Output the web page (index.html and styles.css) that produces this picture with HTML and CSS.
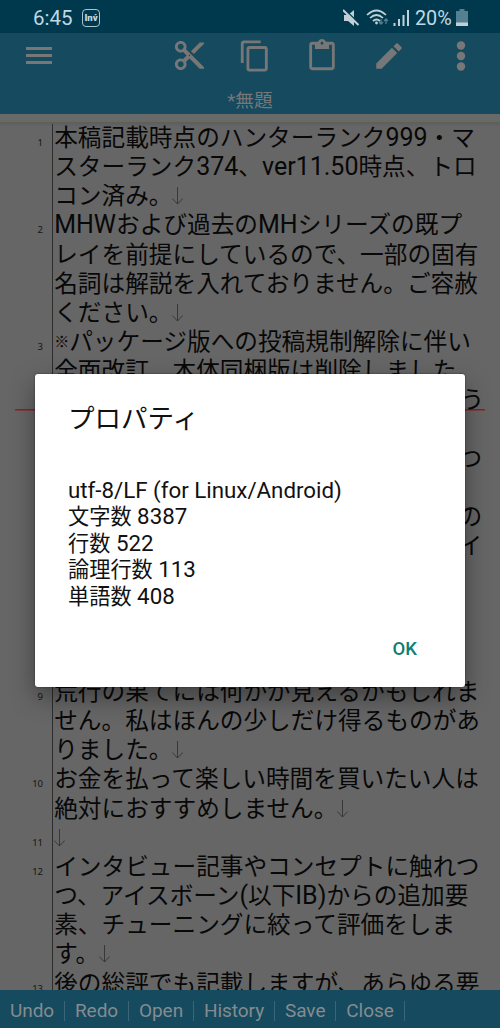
FILE: index.html
```html
<!DOCTYPE html>
<html lang="ja">
<head>
<meta charset="utf-8">
<title>無題</title>
<link rel="stylesheet" href="styles.css">
</head>
<body>
<svg class="defs" width="0" height="0"><symbol id="ret" viewBox="0 0 11 18"><path d="M5.5 0V17M.3 11.5L5.5 17L10.7 11.5" fill="none" stroke="#333" stroke-width=".9"/></symbol></svg>
<div class="screen">
  <header class="status">
    <span class="clock">6:45</span>
    <span class="inv">Inv́</span>
    <svg class="sysicons" width="68" height="20" viewBox="0 0 68 20">
      <path d="M1 6h4l6-5v16l-6-5H1z" fill="#c0d0d6"/>
      <path d="M1 0L17 15" stroke="#00394d" stroke-width="1.500"/>
      <path d="M0 1L15.500 16" stroke="#c0d0d6" stroke-width="2"/>
      <g fill="none" stroke="#c0d0d6" stroke-width="1.7"><path d="M24 6Q33.500-3 43 6M27 9Q33.500 3 40 9M30 12Q33.500 9 37 12"/></g>
      <circle cx="33.500" cy="14" r="1.400" fill="#c0d0d6"/>
      <path d="M38 10v5m-2-2l2 2 2-2M43 15v-5m-2 2l2-2 2 2" fill="none" stroke="#54808f" stroke-width="1.300"/>
      <path d="M51.500 14v3M56 10v7M60.500 6v11M65 1v16" stroke="#c0d0d6" stroke-width="2"/>
    </svg>
    <span class="percent">20%</span>
    <svg class="battery" width="12" height="18" viewBox="0 0 12 18"><path d="M3.500 0h5v2H12v12H0V2h3.500z" fill="#54808f"/><path d="M0 13.500h12V17H0z" fill="#c0d0d6"/></svg>
  </header>
  <nav class="toolbar">
    <div class="tools">
      <svg class="menu" width="26" height="18" viewBox="0 0 26 18"><path d="M0 1.500h26M0 8.500h26M0 15.500h26" stroke="currentColor" stroke-width="2.800"/></svg>
      <svg class="tool cut" viewBox="0 0 24 24"><path d="M9.640 7.640c.23-.5.360-1.050.360-1.640 0-2.210-1.790-4-4-4S2 3.790 2 6s1.790 4 4 4c.59 0 1.140-.13 1.640-.36L10 12l-2.360 2.360C7.140 14.130 6.590 14 6 14c-2.210 0-4 1.790-4 4s1.790 4 4 4 4-1.790 4-4c0-.59-.13-1.140-.36-1.640L12 14l7 7h3v-1L9.640 7.640zM6 8c-1.100 0-2-.89-2-2s.9-2 2-2 2 .89 2 2-.9 2-2 2zm0 12c-1.100 0-2-.89-2-2s.9-2 2-2 2 .89 2 2-.9 2-2 2zm6-7.500c-.28 0-.5-.22-.5-.5s.22-.5.5-.5.5.22.5.5-.22.5-.5.5zM19 3l-6 6 2 2 7-7V3z"/></svg>
      <svg class="tool copy" viewBox="0 0 24 24"><path d="M16 1H4c-1.100 0-2 .9-2 2v14h2V3h12V1zm3 4H8c-1.100 0-2 .9-2 2v14c0 1.100.9 2 2 2h11c1.100 0 2-.9 2-2V7c0-1.100-.9-2-2-2zm0 16H8V7h11v14z"/></svg>
      <svg class="tool paste" viewBox="0 0 24 24"><path d="M19 2h-4.180C14.400.84 13.300 0 12 0c-1.300 0-2.400.84-2.820 2H5c-1.100 0-2 .9-2 2v16c0 1.100.9 2 2 2h14c1.100 0 2-.9 2-2V4c0-1.100-.9-2-2-2zm-7 0c.55 0 1 .45 1 1s-.45 1-1 1-1-.45-1-1 .45-1 1-1zm7 18H5V4h2v3h10V4h2v16z"/></svg>
      <svg class="tool edit" viewBox="0 0 24 24"><path d="M3 17.250V21h3.750L17.810 9.940l-3.750-3.750L3 17.250zM20.710 7.040c.39-.39.390-1.020 0-1.410l-2.340-2.340c-.39-.39-1.020-.39-1.410 0l-1.830 1.830 3.750 3.750 1.830-1.830z"/></svg>
      <svg class="more" width="10" height="30" viewBox="0 0 10 30"><g fill="currentColor"><circle cx="5" cy="4.500" r="4.200"/><circle cx="5" cy="15" r="4.200"/><circle cx="5" cy="25.500" r="4.200"/></g></svg>
    </div>
    <div class="filename">*無題</div>
  </nav>
  <main class="editor">
    <div class="row"><i>1</i><p>本稿記載時点のハンターランク<b>999</b>・マ</p></div>
    <div class="row"><i></i><p>スターランク<b>374</b>、<b>ver11.50</b>時点、トロ</p></div>
    <div class="row"><i></i><p>コン済み。<svg class="ret"><use href="#ret"/></svg></p></div>
    <div class="row"><i>2</i><p><b>MHW</b>および過去の<b>MH</b>シリーズの既プ</p></div>
    <div class="row"><i></i><p>レイを前提にしているので、一部の固有</p></div>
    <div class="row"><i></i><p>名詞は解説を入れておりません。ご容赦</p></div>
    <div class="row"><i></i><p>ください。<svg class="ret"><use href="#ret"/></svg></p></div>
    <div class="row"><i>3</i><p><span class="mark">※</span>パッケージ版への投稿規制解除に伴い</p></div>
    <div class="row"><i></i><p>全面改訂、本体同梱版は削除しました。</p></div>
    <div class="row current"><i></i><p class="tail">う</p></div>
    <div class="row"><i></i><p></p></div>
    <div class="row"><i></i><p class="tail">つ</p></div>
    <div class="row"><i></i><p></p></div>
    <div class="row"><i></i><p class="tail">の</p></div>
    <div class="row"><i></i><p class="tail">イ</p></div>
    <div class="row"><i></i><p></p></div>
    <div class="row"><i></i><p></p></div>
    <div class="row"><i></i><p></p></div>
    <div class="row"><i></i><p></p></div>
    <div class="row"><i>9</i><p>荒行の果てには何かが見えるかもしれま</p></div>
    <div class="row"><i></i><p>せん。私はほんの少しだけ得るものがあ</p></div>
    <div class="row"><i></i><p>りました。<svg class="ret"><use href="#ret"/></svg></p></div>
    <div class="row"><i>10</i><p>お金を払って楽しい時間を買いたい人は</p></div>
    <div class="row"><i></i><p>絶対におすすめしません。<svg class="ret"><use href="#ret"/></svg></p></div>
    <div class="row"><i>11</i><p><svg class="ret"><use href="#ret"/></svg></p></div>
    <div class="row"><i>12</i><p>インタビュー記事やコンセプトに触れつ</p></div>
    <div class="row"><i></i><p>つ、アイスボーン<b>(</b>以下<b>IB)</b>からの追加要</p></div>
    <div class="row"><i></i><p>素、チューニングに絞って評価をしま</p></div>
    <div class="row"><i></i><p>す。<svg class="ret"><use href="#ret"/></svg></p></div>
    <div class="row"><i>13</i><p>後の総評でも記載しますが、あらゆる要</p></div>
  </main>
  <footer class="actions"><span>Undo</span><span>Redo</span><span>Open</span><span>History</span><span>Save</span><span>Close</span></footer>
  <section class="dialog" role="dialog">
    <h1>プロパティ</h1>
    <div class="details">
      <div><b>utf-8/LF (for Linux/Android)</b></div>
      <div>文字数<b> 8387</b></div>
      <div>行数<b> 522</b></div>
      <div>論理行数<b> 113</b></div>
      <div>単語数<b> 408</b></div>
    </div>
    <button class="ok">OK</button>
  </section>
</div>
</body>
</html>
```

FILE: styles.css
```css
* { box-sizing: border-box; }
body { margin: 0; background: #666; font-family: Roboto, "Noto Sans CJK JP", sans-serif; }
.defs { position: absolute; }
.screen { position: relative; display: flex; flex-direction: column; width: 500px; height: 1028px; overflow: hidden; }

.status { flex: none; display: flex; align-items: center; height: 33px; padding: 3px 0 0 33px; background: #00394d; color: #c0d8e2; }
.clock { width: 49px; font-size: 20.5px; }
.inv { width: 18px; height: 18px; border: 1px solid #a9c4cf; border-radius: 4px; font: 900 9.5px/15px Roboto, sans-serif; text-align: center; }
.sysicons { margin: 1px 4px 0 243px; }
.percent { font-size: 19.8px; }
.battery { margin-left: 4px; }

.toolbar { flex: none; height: 81px; background: #154a5f; color: #777; }
.tools { display: flex; height: 56px; padding-left: 26px; }
.menu { margin-top: 14px; }
.tool { width: 34px; height: 34px; margin-top: 6px; fill: currentColor; }
.cut { width: 35px; height: 35px; margin: 5px 0 0 120px; }
.copy { margin-left: 31px; }
.paste { margin-left: 33px; }
.edit { margin-left: 33px; }
.more { margin: 8px 0 0 50px; }
.filename { text-align: center; font-size: 18.7px; line-height: 25px; }

.editor { flex: none; height: 876px; padding-top: 10px; overflow: hidden; color: #080808; background: linear-gradient(#696969 0 6px, #666c64 6px 8px, #5d5d5d 8px, #666 13px); }
.row { display: flex; height: 29.17px; line-height: 29.17px; }
.row:first-child { height: 31.17px; margin-top: -2px; padding-top: 2px; }
.row i { flex: none; width: 53px; padding: 4px 9px 0 0; border-right: 1px solid #2d2d2d; font: normal 9.5px/30px "Noto Sans", sans-serif; text-align: right; color: #151515; }
.row p { flex: none; width: 428px; margin: 0 0 0 1.2px; font-size: 23.66px; white-space: nowrap; }
.row b { font-size: 25px; font-weight: 400; line-height: 1; }
.mark { display: inline-block; width: 15px; font-size: 15px; font-weight: 500; line-height: 1; vertical-align: 3px; }
.row p.tail { text-align: right; }
.current { margin-left: 15px; width: 470px; background: linear-gradient(#961c1c, #961c1c) 0 22.5px / 100% 1.5px no-repeat; }
.current i { width: 38px; }
.current p.tail { width: 430px; }
.ret { width: 11px; height: 18px; vertical-align: -1px; }

.actions { flex: none; display: flex; align-items: center; height: 38px; padding: 3px 0 0; background: #154a5f; color: #858c90; font-size: 19px; }
.actions span { height: 20px; padding: 0 9.9px; line-height: 20px; letter-spacing: -.03px; border-right: 1px solid #3b6578; }

.dialog { position: absolute; left: 35px; top: 374px; display: flex; flex-direction: column; width: 430px; height: 313px; padding: 26px 33px 20px; border-radius: 3px; background: #fff; color: #111; box-shadow: 0 0 2px rgba(0,0,0,.5), 0 10px 26px rgba(0,0,0,.38); }
.dialog h1 { margin: 0; font-size: 26.5px; font-weight: 400; line-height: 38px; }
.details { margin-top: 40px; font-size: 21.2px; line-height: 26.4px; }
.details b { font-size: 22.3px; font-weight: 400; line-height: 1; }
.ok { align-self: flex-end; margin: 26px 15px 0 0; padding: 0; border: 0; background: none; color: #0b8175; font: 500 18.5px/26px Roboto, sans-serif; }
```
